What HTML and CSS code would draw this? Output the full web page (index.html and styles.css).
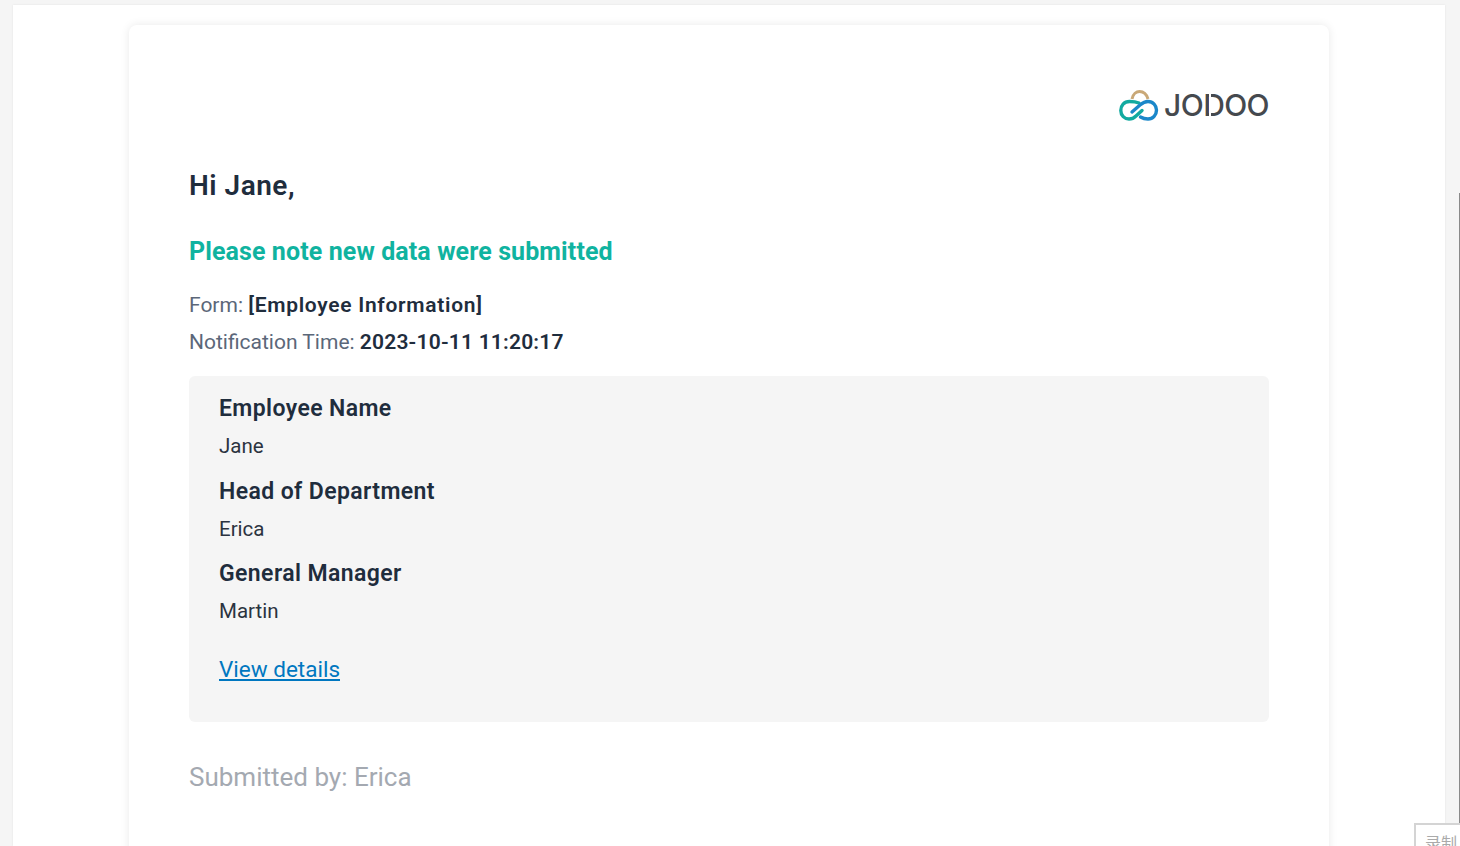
FILE: index.html
```html
<!DOCTYPE html>
<html lang="en">
<head>
<meta charset="utf-8">
<title>Jodoo notification</title>
<link rel="stylesheet" href="styles.css">
</head>
<body>
<div class="page">
  <div class="sheet">
    <main class="card">
      <div class="logo-row">
        <svg class="logo-mark" width="41" height="31" viewBox="0 0 41 31" fill="none">
          <path d="M14 9C15 4 18.500 1.500 21.500 1.500C25 1.500 28.500 4 30 9" stroke="#c9a877" stroke-width="3"/>
          <path d="M21 13C18 11.800 15 11.500 11.500 11.500C6 11.500 2.800 15.500 2.800 20.500C2.800 25.500 6.500 29 11 29C14 29 16 28 18 26L24 20.500" stroke="#12aaa0" stroke-width="3.400" stroke-linecap="round"/>
          <path d="M14 22L22 15C25 12.500 27 11.500 30 11.500C35 11.500 38.500 15.500 38.500 20C38.500 25 35 29 30 29C27 29 25 28.500 22.500 27" stroke="#1b87c9" stroke-width="3.400" stroke-linecap="round"/>
        </svg>
        <span class="logo-word">JO<span class="logo-d">D</span>OO</span>
      </div>
      <h1 class="greeting">Hi Jane,</h1>
      <h2 class="notice">Please note new data were submitted</h2>
      <p class="meta">Form: <strong class="form-name">[Employee Information]</strong></p>
      <p class="meta">Notification Time: <strong class="stamp">2023-10-11 11:20:17</strong></p>
      <section class="panel">
        <div class="field">
          <div class="label">Employee Name</div>
          <div class="value">Jane</div>
        </div>
        <div class="field">
          <div class="label">Head of Department</div>
          <div class="value">Erica</div>
        </div>
        <div class="field">
          <div class="label">General Manager</div>
          <div class="value">Martin</div>
        </div>
        <a class="details" href="#">View details</a>
      </section>
      <p class="submitted">Submitted by: Erica</p>
    </main>
  </div>
</div>
<div class="scroll-edge"></div>
<div class="record-tab">录制</div>
</body>
</html>
```
FILE: styles.css
```css
html, body {
  margin: 0;
  height: 100%;
  overflow: hidden;
}
body {
  font-family: Roboto, "Noto Sans CJK SC", sans-serif;
  background: #f5f5f5;
  color: #1f2d3d;
}
.page {
  height: 846px;
  box-sizing: border-box;
  padding: 5px 15px 0 13px;
  overflow: hidden;
}
.sheet {
  background: #fff;
  height: 100%;
  box-sizing: border-box;
  padding-top: 20px;
  box-shadow: 0 0 2px rgba(0, 0, 0, .08);
  overflow: hidden;
}
.card {
  width: 1200px;
  box-sizing: border-box;
  margin-left: 116px;
  padding: 60px 60px 0;
  height: 900px;
  background: #fff;
  border-radius: 8px;
  box-shadow: 0 0 10px rgba(0, 0, 0, .09);
}
.logo-row {
  display: flex;
  justify-content: flex-end;
  align-items: center;
  gap: 5px;
  height: 40px;
}
.logo-mark {
  flex: none;
}
.logo-word {
  font-family: Inter, sans-serif;
  font-size: 30px;
  line-height: 40px;
  font-weight: 500;
  letter-spacing: -.6px;
  color: #45494e;
}
.logo-d {
  position: relative;
}
.logo-d::after {
  content: "";
  position: absolute;
  left: 6px;
  top: 6px;
  width: 2px;
  height: 28px;
  background: #fff;
}
.greeting {
  margin: 41px 0 0;
  font-size: 28px;
  line-height: 40px;
  font-weight: 600;
  letter-spacing: .5px;
}
.notice {
  margin: 30px 0 0;
  font-size: 25px;
  line-height: 32px;
  font-weight: 700;
  letter-spacing: .1px;
  color: #10b3a0;
}
.meta {
  margin: 0;
  font-size: 21px;
  line-height: 37px;
  color: #5b6779;
}
.notice + .meta {
  margin-top: 19px;
}
.meta strong {
  font-weight: 600;
  color: #1f2d3d;
}
.form-name {
  letter-spacing: .7px;
}
.stamp {
  letter-spacing: .2px;
}
.panel {
  margin-top: 15px;
  height: 346px;
  box-sizing: border-box;
  padding: 15px 30px 0;
  background: #f5f5f5;
  border-radius: 6px;
}
.field {
  margin-bottom: 8.500px;
}
.label {
  font-size: 23px;
  line-height: 36px;
  font-weight: 600;
  letter-spacing: .4px;
}
.value {
  font-size: 20.500px;
  line-height: 38px;
  color: #2b3340;
}
.details {
  display: block;
  margin-top: 20.500px;
  font-size: 22.500px;
  line-height: 36px;
  color: #0077c0;
}
.submitted {
  margin: 36px 0 0;
  font-size: 26px;
  line-height: 38px;
  color: #a4a9b1;
}
.scroll-edge {
  position: absolute;
  left: 1459px;
  top: 193px;
  width: 1px;
  height: 653px;
  background: #8a8a8a;
}
.record-tab {
  position: absolute;
  left: 1414px;
  top: 823px;
  width: 46px;
  height: 23px;
  box-sizing: border-box;
  padding: 9px 0 0 9px;
  border: 2px solid #d4d4d4;
  border-right: 0;
  border-bottom: 0;
  background: #fff;
  font-size: 16px;
  line-height: 20px;
  color: #aaa;
  overflow: hidden;
}
```
